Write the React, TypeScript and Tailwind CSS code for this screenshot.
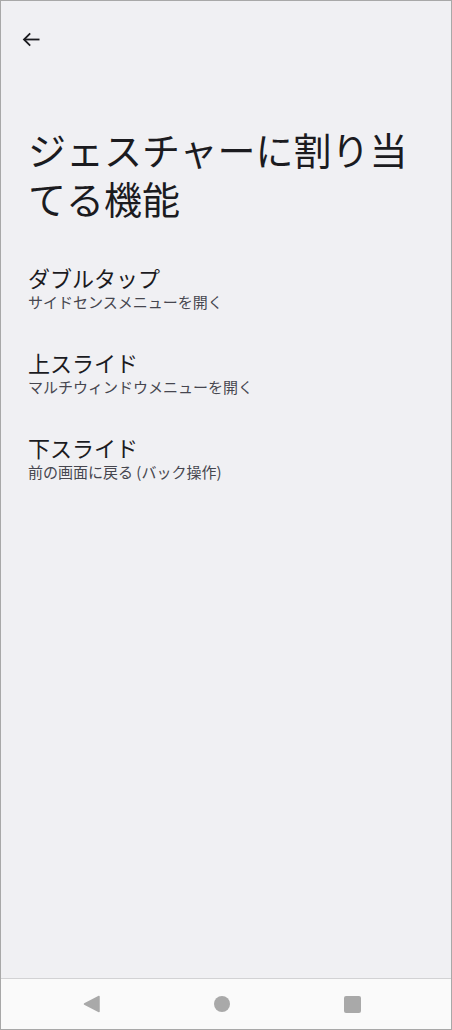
export default function App() {
  const items = [
    { title: "ダブルタップ", sub: "サイドセンスメニューを開く" },
    { title: "上スライド", sub: "マルチウィンドウメニューを開く" },
    { title: "下スライド", sub: "前の画面に戻る (バック操作)" },
  ];

  return (
    <div
      className="w-[452px] h-[1030px] flex flex-col border border-[#a8a8a8] bg-[#f0f0f3] text-[#1b1b1f]"
      style={{ fontFamily: '"Noto Sans CJK JP", "Noto Sans", Roboto, sans-serif' }}
    >
      <div className="h-[76px] flex items-center pl-[21px] shrink-0">
        <svg width="18" height="15" viewBox="0 0 18 15" fill="none" stroke="#1b1b1f" strokeWidth="1.8">
          <path d="M17.5 7.5H2" />
          <path d="M8.2 1.3 L2 7.5 L8.2 13.7" strokeLinejoin="miter" />
        </svg>
      </div>

      <h1 className="mt-[47px] px-[27px] text-[38px] leading-[49px] font-normal">
        ジェスチャーに割り当てる機能
      </h1>

      <div className="mt-[40px] flex flex-col gap-[35px] px-[27px]">
        {items.map((item) => (
          <div key={item.title} className="flex flex-col">
            <span className="text-[22px] leading-[30px]">{item.title}</span>
            <span className="text-[15px] leading-[20px] text-[#46464f]">{item.sub}</span>
          </div>
        ))}
      </div>

      <div className="flex-1" />

      <div className="h-[51px] shrink-0 border-t border-[#d2d2d4] bg-[#fafafa] flex items-center justify-center gap-[114px] pr-[8px]">
        <svg width="17" height="18" viewBox="0 0 17 18">
          <path d="M16 1.5 L16 16.5 L1.5 9 Z" fill="#a9a9a9" stroke="#a9a9a9" strokeWidth="1.5" strokeLinejoin="round" />
        </svg>
        <div className="w-[16px] h-[16px] rounded-full bg-[#a9a9a9]" />
        <div className="w-[17px] h-[17px] rounded-[2px] bg-[#a9a9a9]" />
      </div>
    </div>
  );
}
